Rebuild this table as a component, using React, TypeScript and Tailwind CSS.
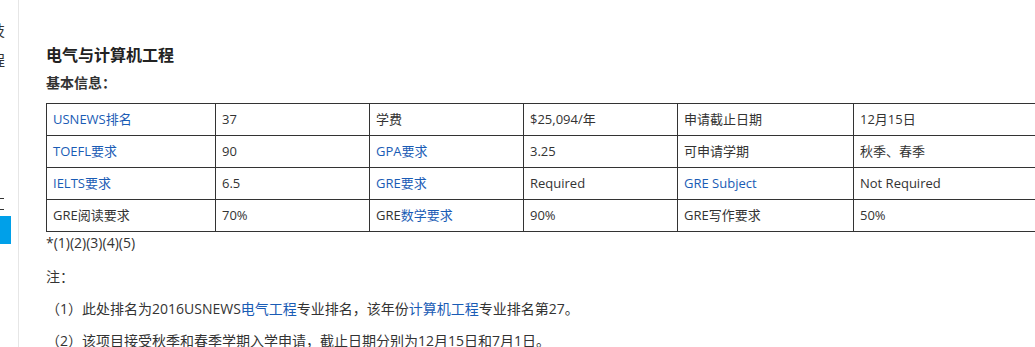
const link = "text-[#1a5cb5]";

type Cell = { text: React.ReactNode; link?: boolean };

const rows: Cell[][] = [
  [
    { text: "USNEWS排名", link: true },
    { text: "37" },
    { text: "学费" },
    { text: "$25,094/年" },
    { text: "申请截止日期" },
    { text: "12月15日" },
  ],
  [
    { text: "TOEFL要求", link: true },
    { text: "90" },
    { text: "GPA要求", link: true },
    { text: "3.25" },
    { text: "可申请学期" },
    { text: "秋季、春季" },
  ],
  [
    { text: "IELTS要求", link: true },
    { text: "6.5" },
    { text: "GRE要求", link: true },
    { text: "Required" },
    { text: "GRE Subject", link: true },
    { text: "Not Required" },
  ],
  [
    { text: "GRE阅读要求" },
    { text: "70%" },
    {
      text: (
        <>
          GRE<span className={link}>数学要求</span>
        </>
      ),
    },
    { text: "90%" },
    { text: "GRE写作要求" },
    { text: "50%" },
  ],
];

const widths = ["w-[169px]", "w-[154px]", "w-[154px]", "w-[154px]", "w-[176px]", "w-[233px]"];

function Sidebar() {
  return (
    <div className="w-[19px] shrink-0 border-r border-[#e6e6e6] h-full">
      <div className="w-[11px] overflow-hidden text-[15px] text-[#333]">
        <div className="ml-[-10px] w-[21px] h-[16px] mt-[22px] leading-[16px] whitespace-nowrap">技</div>
        <div className="ml-[-10px] w-[21px] h-[16px] mt-[14px] leading-[16px] whitespace-nowrap">程</div>
        <div className="mt-[130px] flex flex-col gap-[10px]">
          <div className="h-px w-[4px] bg-[#333]" />
          <div className="h-px w-[4px] bg-[#333]" />
        </div>
        <div className="mt-[6px] h-[28px] w-[11px] bg-[#00a0e9]" />
      </div>
    </div>
  );
}

export default function App() {
  return (
    <div
      className="w-[1035px] h-[347px] overflow-hidden bg-white flex text-[#333]"
      style={{ fontFamily: '"Open Sans", "Noto Sans CJK SC", sans-serif' }}
    >
      <Sidebar />
      <div className="pl-[27px] pt-[43px] min-w-0 flex-1 overflow-hidden">
        <h2 className="text-[16px] leading-[24px] font-bold text-[#222]">电气与计算机工程</h2>
        <div className="mt-[6px] text-[14px] leading-[20px] font-bold text-[#333]">基本信息：</div>
        <table className="mt-[10px] table-fixed border-collapse w-[1040px] text-[13px]">
          <tbody>
            {rows.map((r, i) => (
              <tr key={i} className="h-[32px]">
                {r.map((c, j) => (
                  <td
                    key={j}
                    className={`${widths[j]} border border-[#333] px-[6px] align-middle whitespace-nowrap ${
                      c.link ? link : ""
                    }`}
                  >
                    {c.text}
                  </td>
                ))}
              </tr>
            ))}
          </tbody>
        </table>
        <div className="text-[14px] leading-[22px]">*(1)(2)(3)(4)(5)</div>
        <div className="mt-[7px] text-[14px] leading-[32px]">
          <p>注：</p>
          <p>
            （1）此处排名为2016USNEWS<span className={link}>电气工程</span>专业排名，该年份
            <span className={link}>计算机工程</span>专业排名第27。
          </p>
          <p>（2）该项目接受秋季和春季学期入学申请，截止日期分别为12月15日和7月1日。</p>
        </div>
      </div>
    </div>
  );
}
